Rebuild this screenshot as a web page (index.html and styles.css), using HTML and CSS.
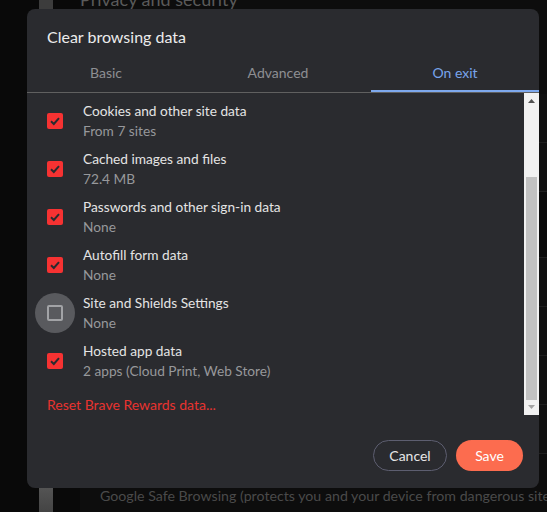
FILE: index.html
```html
<!DOCTYPE html>
<html lang="en">
<head>
<meta charset="utf-8">
<title>Clear browsing data</title>
<link rel="stylesheet" href="styles.css">
</head>
<body>
<div class="page">
  <div class="rail"><div class="rail-bar"></div></div>
  <div class="main">
    <div class="section-title">Privacy and security</div>
    <div class="bg-rows">
      <div class="bg-row"></div>
      <div class="bg-row"></div>
      <div class="bg-row dark"></div>
      <div class="bg-row"></div>
      <div class="bg-row"></div>
      <div class="bg-row"></div>
      <div class="bg-row"></div>
    </div>
    <div class="bg-text">Google Safe Browsing (protects you and your device from dangerous sites)</div>
  </div>
</div>

<div class="dialog">
  <div class="dlg-title">Clear browsing data</div>
  <div class="tabs">
    <div class="tab">Basic</div>
    <div class="tab">Advanced</div>
    <div class="tab active">On exit</div>
  </div>
  <div class="body-row">
    <div class="scroll">
      <div class="list">
        <div class="item">
          <span class="cb checked"><svg viewBox="0 0 16 16" width="16" height="16"><rect width="16" height="16" rx="2" fill="#f63232"/><path d="M4 8.3 L6.8 11 L12 5.2" fill="none" stroke="#2a2b2f" stroke-width="2"/></svg></span>
          <div class="text"><div class="label">Browsing history</div><div class="sub">None</div></div>
        </div>
        <div class="item">
          <span class="cb checked"><svg viewBox="0 0 16 16" width="16" height="16"><rect width="16" height="16" rx="2" fill="#f63232"/><path d="M4 8.3 L6.8 11 L12 5.2" fill="none" stroke="#2a2b2f" stroke-width="2"/></svg></span>
          <div class="text"><div class="label">Download history</div><div class="sub">None</div></div>
        </div>
        <div class="item">
          <span class="cb checked"><svg viewBox="0 0 16 16" width="16" height="16"><rect width="16" height="16" rx="2" fill="#f63232"/><path d="M4 8.3 L6.8 11 L12 5.2" fill="none" stroke="#2a2b2f" stroke-width="2"/></svg></span>
          <div class="text"><div class="label">Cookies and other site data</div><div class="sub">From 7 sites</div></div>
        </div>
        <div class="item">
          <span class="cb checked"><svg viewBox="0 0 16 16" width="16" height="16"><rect width="16" height="16" rx="2" fill="#f63232"/><path d="M4 8.3 L6.8 11 L12 5.2" fill="none" stroke="#2a2b2f" stroke-width="2"/></svg></span>
          <div class="text"><div class="label">Cached images and files</div><div class="sub">72.4 MB</div></div>
        </div>
        <div class="item">
          <span class="cb checked"><svg viewBox="0 0 16 16" width="16" height="16"><rect width="16" height="16" rx="2" fill="#f63232"/><path d="M4 8.3 L6.8 11 L12 5.2" fill="none" stroke="#2a2b2f" stroke-width="2"/></svg></span>
          <div class="text"><div class="label">Passwords and other sign-in data</div><div class="sub">None</div></div>
        </div>
        <div class="item">
          <span class="cb checked"><svg viewBox="0 0 16 16" width="16" height="16"><rect width="16" height="16" rx="2" fill="#f63232"/><path d="M4 8.3 L6.8 11 L12 5.2" fill="none" stroke="#2a2b2f" stroke-width="2"/></svg></span>
          <div class="text"><div class="label">Autofill form data</div><div class="sub">None</div></div>
        </div>
        <div class="item">
          <span class="cb unchecked focused"><span class="box"></span></span>
          <div class="text"><div class="label">Site and Shields Settings</div><div class="sub">None</div></div>
        </div>
        <div class="item">
          <span class="cb checked"><svg viewBox="0 0 16 16" width="16" height="16"><rect width="16" height="16" rx="2" fill="#f63232"/><path d="M4 8.3 L6.8 11 L12 5.2" fill="none" stroke="#2a2b2f" stroke-width="2"/></svg></span>
          <div class="text"><div class="label">Hosted app data</div><div class="sub">2 apps (Cloud Print, Web Store)</div></div>
        </div>
        <div class="reset">Reset Brave Rewards data...</div>
      </div>
    </div>
    <div class="scrollbar">
      <div class="sb-btn"><svg viewBox="0 0 15 15" width="15" height="15"><path d="M4 10 L7.5 6 L11 10 Z" fill="#505050"/></svg></div>
      <div class="sb-track"><div class="sb-thumb"></div></div>
      <div class="sb-btn"><svg viewBox="0 0 15 15" width="15" height="15"><path d="M4 5 L7.5 9 L11 5 Z" fill="#a3a3a3"/></svg></div>
    </div>
  </div>
  <div class="footer">
    <button class="btn cancel">Cancel</button>
    <button class="btn save">Save</button>
  </div>
</div>
</body>
</html>
```

FILE: styles.css
```css
* { box-sizing: border-box; }

html, body {
  margin: 0;
  padding: 0;
  width: 547px;
  height: 512px;
  overflow: hidden;
  background: #090909;
  font-family: "Lato", "Open Sans", sans-serif;
}

.page {
  display: flex;
  width: 547px;
  height: 512px;
}

.rail {
  width: 80px;
  padding-left: 39px;
  flex: none;
}

.rail-bar {
  width: 14px;
  height: 100%;
  background: linear-gradient(#3c3c3c, #3c3c3c 60%, #555 95%, #444);
}

.main {
  flex: 1;
  display: flex;
  flex-direction: column;
  background: #0d0d0d;
}

.section-title {
  font-size: 18px;
  line-height: 22px;
  color: #5a5a5a;
  margin-top: -12px;
  height: 22px;
}

.bg-rows {
  flex: 1;
  display: flex;
  flex-direction: column;
  padding-top: 84px;
}

.bg-row {
  height: 49px;
  border-bottom: 1px solid #1f1f1f;
  background: #101010;
}

.bg-row.dark {
  height: 66px;
  background: #0a0a0a;
}

.bg-text {
  height: 34px;
  padding: 9px 0 0 20px;
  font-size: 14.2px;
  line-height: 18px;
  color: #4a4a4a;
  white-space: nowrap;
  background: #0d0d0d;
}

/* dialog */
.dialog {
  position: absolute;
  left: 27px;
  top: 9px;
  width: 512px;
  height: 479px;
  background: #2a2b2f;
  border-radius: 8px;
  display: flex;
  flex-direction: column;
  overflow: hidden;
  color: #e6e6e6;
}

.dlg-title {
  padding: 18px 20px 0;
  font-size: 16px;
  line-height: 20px;
  height: 38px;
  color: #ececec;
}

.tabs {
  margin-top: 5px;
  height: 41px;
  flex: none;
  display: grid;
  grid-template-columns: 158px 186px 1fr;
  border-bottom: 1px solid #606060;
}

.tab {
  display: flex;
  align-items: center;
  justify-content: center;
  font-size: 14px;
  color: #8e8f93;
  padding-top: 2px;
  border-bottom: 2px solid transparent;
}

.tab.active {
  color: #78a4ec;
  border-bottom-color: #7ea9ee;
}

.body-row {
  height: 322px;
  flex: none;
  display: flex;
}

.scroll {
  flex: 1;
  overflow: hidden;
  display: flex;
  flex-direction: column;
  justify-content: flex-end;
}

.list {
  flex: none;
  padding: 7px 0 0 20px;
}

.item {
  height: 48px;
  display: flex;
  align-items: center;
  gap: 20px;
}

.cb {
  position: relative;
  width: 16px;
  height: 16px;
  flex: none;
  display: flex;
}

.cb svg { display: block; }

.cb.focused::before {
  content: "";
  position: absolute;
  left: -12px;
  top: -12px;
  width: 40px;
  height: 40px;
  border-radius: 50%;
  background: #595a5e;
}

.box {
  position: relative;
  width: 16px;
  height: 16px;
  border: 2px solid #a2a3a6;
  border-radius: 2px;
}

.text {
  display: flex;
  flex-direction: column;
}

.label {
  font-size: 13.7px;
  line-height: 20px;
  color: #e4e4e4;
}

.sub {
  font-size: 13.7px;
  line-height: 20px;
  color: #97989b;
}

.reset {
  padding-top: 10px;
  font-size: 14px;
  line-height: 20px;
  color: #e8332f;
}

/* scrollbar */
.scrollbar {
  width: 15px;
  flex: none;
  background: #f1f1f1;
  display: flex;
  flex-direction: column;
}

.sb-btn {
  height: 15px;
  flex: none;
}

.sb-btn svg { display: block; }

.sb-track {
  flex: 1;
  display: flex;
  flex-direction: column;
  justify-content: flex-end;
  padding: 0 2px;
}

.sb-thumb {
  height: 223px;
  background: #c1c1c1;
}

.footer {
  flex: 1;
  display: flex;
  justify-content: flex-end;
  align-items: flex-start;
  gap: 9px;
  padding: 25px 16px 0;
}

.btn {
  height: 31px;
  border-radius: 16px;
  font-family: inherit;
  font-size: 14px;
  padding: 0;
  cursor: pointer;
}

.cancel {
  width: 74px;
  background: transparent;
  border: 1px solid #5d5e70;
  color: #e6e6e6;
}

.save {
  width: 67px;
  background: #fc6c4f;
  border: none;
  color: #fff;
}
```
